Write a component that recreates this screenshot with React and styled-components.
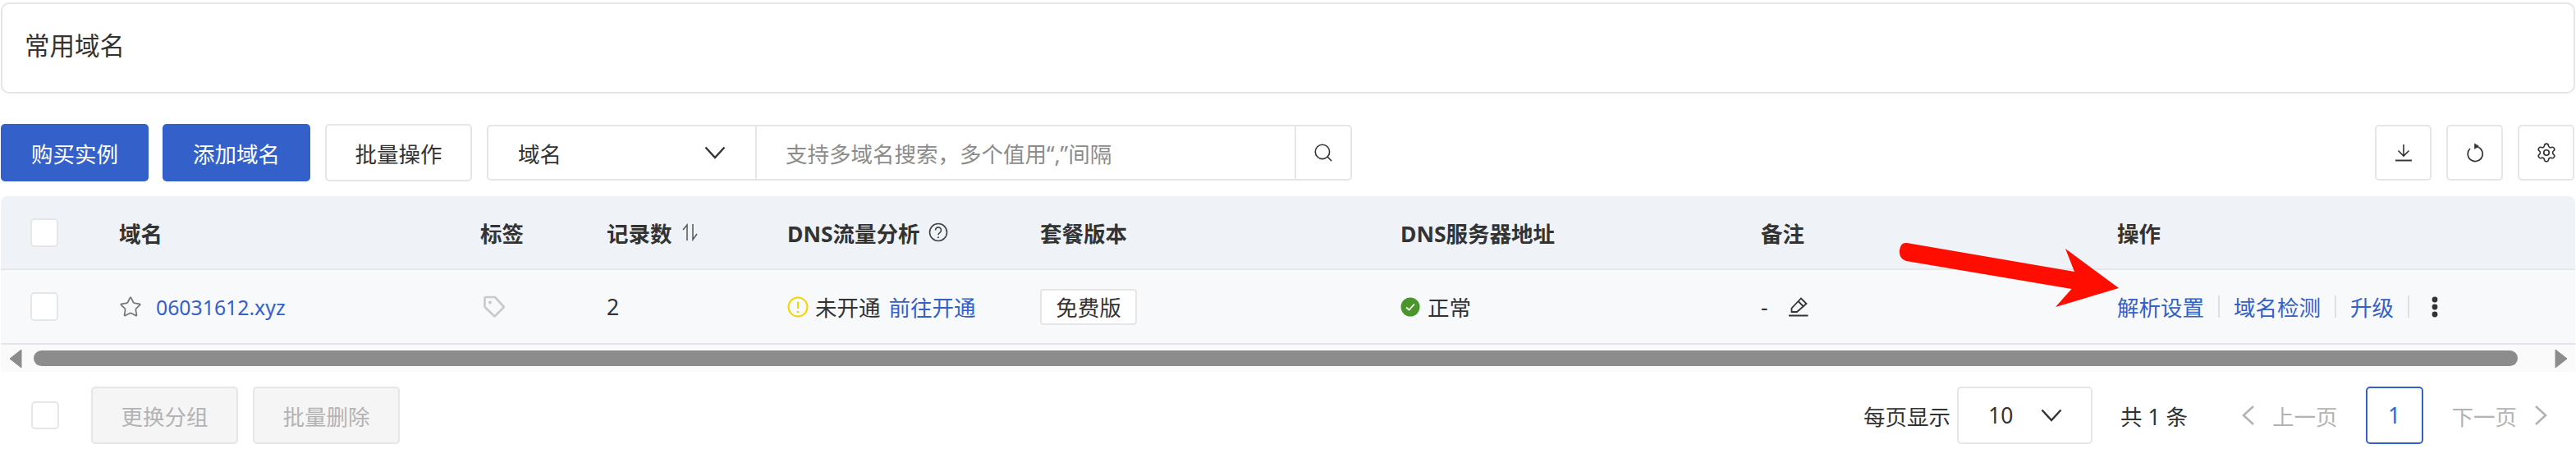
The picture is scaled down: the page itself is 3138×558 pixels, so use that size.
import React from 'react';
import styled, { createGlobalStyle } from 'styled-components';
import { Settings, Search, Star } from 'lucide-react';

const GlobalStyle = createGlobalStyle`
  html, body {
    margin: 0;
    padding: 0;
    background: #fff;
  }
  body {
    font-family: "Noto Sans", "Noto Sans CJK SC", sans-serif;
    color: #333;
    font-size: 26.5px;
  }
  * {
    box-sizing: border-box;
  }
`;

const COLUMNS = '108px 440px 154px 220px 308px 439px 439px 434px 1fr';

const Page = styled.div`
  width: 3138px;
  height: 558px;
  padding: 3px 1px 0 1px;
  overflow: hidden;
  position: relative;
`;

const TitleCard = styled.div`
  height: 111px;
  border: 2px solid #e6e6e6;
  border-radius: 10px;
  padding: 0 27px 9px;
  display: flex;
  align-items: center;
  font-size: 30.5px;
`;

const Toolbar = styled.div`
  display: flex;
  align-items: center;
  margin-top: 37px;
  height: 70px;
`;

const Button = styled.button`
  height: 70px;
  width: ${(p) => p.$width || 180}px;
  margin-right: ${(p) => p.$gap || 0}px;
  font: inherit;
  border-radius: 5px;
  flex: none;
  padding: 0;
  background: ${(p) => (p.$primary ? '#3461c9' : '#fff')};
  color: ${(p) => (p.$primary ? '#fff' : '#333')};
  border: ${(p) => (p.$primary ? 'none' : '2px solid #e6e6e6')};
`;

const SearchGroup = styled.div`
  display: flex;
  width: 1054px;
  height: 68px;
  border: 2px solid #e6e6e6;
  border-radius: 5px;
`;

const FieldSelect = styled.div`
  width: 327px;
  padding: 0 36px;
  display: flex;
  align-items: center;
  justify-content: space-between;
  border-right: 2px solid #e6e6e6;
`;

const Placeholder = styled.div`
  flex: 1;
  padding-left: 35px;
  display: flex;
  align-items: center;
  color: #8c8c8c;
`;

const SearchButton = styled.div`
  width: 68px;
  border-left: 2px solid #e6e6e6;
  display: flex;
  align-items: center;
  justify-content: center;
`;

const ToolIcons = styled.div`
  margin-left: auto;
  margin-right: 1px;
  display: flex;
  gap: 18px;
`;

const IconButton = styled.div`
  width: 69px;
  height: 68px;
  border: 2px solid #e6e6e6;
  border-radius: 5px;
  display: flex;
  align-items: center;
  justify-content: center;
`;

const Table = styled.div`
  margin-top: 18px;
  border-radius: 8px 8px 0 0;
  overflow: hidden;
`;

const HeadRow = styled.div`
  display: grid;
  grid-template-columns: ${COLUMNS};
  align-items: center;
  height: 90px;
  padding-left: 36px;
  background: #eff2f7;
  border-bottom: 2px solid #e4e6ea;
  font-weight: 700;
`;

const BodyRow = styled.div`
  display: grid;
  grid-template-columns: ${COLUMNS};
  align-items: center;
  height: 91px;
  padding-left: 36px;
  background: #f8f9fb;
  border-bottom: 2px solid #e4e6ea;
`;

const Check = styled.div`
  width: 34px;
  height: 35px;
  background: #fff;
  border: 2px solid #e6e6e6;
  border-radius: 5px;
`;

const Cell = styled.div`
  display: flex;
  align-items: center;
`;

const Link = styled.span`
  color: #3461c9;
`;

const DomainLink = styled(Link)`
  margin-left: 17px;
  font-size: 24.8px;
`;

const Plan = styled.div`
  width: 118px;
  height: 44px;
  background: #fff;
  border: 2px solid #e6e6e6;
  border-radius: 4px;
  display: flex;
  align-items: center;
  justify-content: center;
`;

const Divider = styled.i`
  width: 2px;
  height: 27px;
  background: #dcdfe4;
  margin: 0 17px;
`;

const ScrollBar = styled.div`
  height: 33px;
  background: #fafafa;
  display: flex;
  align-items: center;
  padding: 0 10px;
`;

const ScrollThumb = styled.div`
  height: 19px;
  background: #8c8c8c;
  border-radius: 10px;
  flex: none;
  width: 3026px;
  margin: 0 45px 0 14px;
`;

const Footer = styled.div`
  margin-top: 18px;
  height: 70px;
  display: flex;
  align-items: center;
  padding-left: 37px;
`;

const FooterCheck = styled(Check)`
  margin-right: 39px;
  height: 34px;
`;

const DisabledButton = styled(Button)`
  width: 179px;
  background: #f5f5f5;
  color: #b3b3b3;
  margin-right: 18px;
`;

const Pager = styled.div`
  margin-left: auto;
  display: flex;
  align-items: center;
  padding-right: 34px;
`;

const PageSize = styled.div`
  width: 165px;
  height: 70px;
  margin: 0 34px 0 8px;
  padding: 0 35px 0 36px;
  border: 2px solid #e6e6e6;
  border-radius: 5px;
  display: flex;
  align-items: center;
  justify-content: space-between;
`;

const PageLink = styled.span`
  color: #b3b3b3;
  display: flex;
  align-items: center;
  gap: 21px;
`;

const CurrentPage = styled.div`
  width: 70px;
  height: 70px;
  margin: 0 35px 0 34px;
  border: 2px solid #3461c9;
  border-radius: 5px;
  color: #3461c9;
  display: flex;
  align-items: center;
  justify-content: center;
`;

const Total = styled.span`
  margin-right: 66px;
`;

const Spacer = styled.span`
  margin-left: ${(p) => p.$left || 0}px;
  margin-right: ${(p) => p.$right || 0}px;
  display: inline-flex;
`;

const ArrowMark = styled.svg`
  position: absolute;
  left: 2300px;
  top: 290px;
`;

const Caret = () => (
  <svg width="26" height="16" viewBox="0 0 26 16" fill="none" stroke="#333" strokeWidth="2.4">
    <path d="M1.5 1.5 L13 14 L24.500 1.500" />
  </svg>
);

const PageArrow = ({ flip }) => (
  <svg width="16" height="24" viewBox="0 0 16 24" fill="none" stroke="#b3b3b3" strokeWidth="2.6">
    <path d={flip ? 'M2 1 L14 12 L2 23' : 'M14 1 L2 12 L14 23'} />
  </svg>
);

const TagIcon = () => (
  <svg width="28" height="28" viewBox="0 0 28 28" fill="none" stroke="#cacaca" strokeWidth="2.6">
    <path d="M2.500 3.500 Q2.500 2 4 2 L15 2 L26 14 L14.500 25.500 L2.500 14 Z" strokeLinejoin="round" />
    <circle cx="9" cy="8.500" r="2" fill="#cacaca" stroke="none" />
  </svg>
);

const SortIcon = () => (
  <svg width="24" height="24" viewBox="0 0 24 24" fill="none" stroke="#555" strokeWidth="1.5">
    <path d="M8 22 V3 L3 9" />
    <path d="M15 2 V21 L20 14" />
  </svg>
);

const HelpIcon = () => (
  <svg width="24" height="26" viewBox="0 0 24 24" fill="none" stroke="#444" strokeWidth="1.6">
    <circle cx="12" cy="12" r="10.500" />
    <path d="M8.500 9.500a3.500 3.500 0 1 1 5.500 2.800c-1.200.8-2 1.400-2 2.900" />
    <circle cx="12" cy="18.300" r="1" fill="#444" stroke="none" />
  </svg>
);

const WarnIcon = () => (
  <svg width="26" height="26" viewBox="0 0 26 26" fill="none" stroke="#f5d400" strokeWidth="2">
    <circle cx="13" cy="13" r="11.500" />
    <path d="M13 6.500 V15" />
    <circle cx="13" cy="19" r="1.300" fill="#f5d400" stroke="none" />
  </svg>
);

const OkIcon = () => (
  <svg width="24" height="24" viewBox="0 0 24 24">
    <circle cx="12" cy="12" r="11.500" fill="#4a962a" />
    <path d="M7 12.500 L10.500 15.500 L17 8.500" fill="none" stroke="#fff" strokeWidth="1.8" />
  </svg>
);

const EditIcon = () => (
  <svg width="24" height="24" viewBox="0 0 24 24" fill="none" stroke="#333" strokeWidth="1.8">
    <path d="M3.500 18 V13.500 L15 1.500 L21.500 8 L10 18 Z" strokeLinejoin="miter" />
    <path d="M11.500 5 L18 11.500" />
    <path d="M0 22.500 H23.500" strokeWidth="2" />
  </svg>
);

const DownloadIcon = () => (
  <svg width="22" height="22" viewBox="0 0 22 22" fill="none" stroke="#333" strokeWidth="1.6">
    <path d="M11 1 V15 M4.500 8.500 L11 15 L17.500 8.500" />
    <path d="M1 20.500 H21" strokeWidth="1.9" />
  </svg>
);

const RefreshIcon = () => (
  <svg width="22" height="24" viewBox="0 0 22 24" fill="none" stroke="#333" strokeWidth="1.7">
    <path d="M5 7 A9 9 0 1 0 11 4.500" />
    <path d="M10.500 1 L15.500 4 L10.500 7.500 Z" fill="#333" strokeWidth="0.6" />
  </svg>
);

const MoreIcon = () => (
  <svg width="8" height="26" viewBox="0 0 8 26" fill="#333">
    <circle cx="4" cy="4" r="3.400" />
    <circle cx="4" cy="13" r="3.400" />
    <circle cx="4" cy="22" r="3.400" />
  </svg>
);

const Triangle = ({ flip }) => (
  <svg width="16" height="24" viewBox="0 0 16 24" style={{ flex: 'none' }}>
    <path d={flip ? 'M1 1 L15 12 L1 23 Z' : 'M15 1 L1 12 L15 23 Z'} fill="#8c8c8c" stroke="#8c8c8c" strokeLinejoin="round" />
  </svg>
);

const App = () => (
  <Page>
    <GlobalStyle />
    <TitleCard>常用域名</TitleCard>

    <Toolbar>
      <Button $primary $gap={17}>购买实例</Button>
      <Button $primary $gap={18}>添加域名</Button>
      <Button $width={179} $gap={18}>批量操作</Button>
      <SearchGroup>
        <FieldSelect>
          域名
          <Caret />
        </FieldSelect>
        <Placeholder>支持多域名搜索，多个值用“,”间隔</Placeholder>
        <SearchButton>
          <Search size={26} strokeWidth={1.5} color="#333" />
        </SearchButton>
      </SearchGroup>
      <ToolIcons>
        <IconButton><DownloadIcon /></IconButton>
        <IconButton><RefreshIcon /></IconButton>
        <IconButton><Settings size={26} strokeWidth={1.5} color="#333" /></IconButton>
      </ToolIcons>
    </Toolbar>

    <Table>
      <HeadRow>
        <Check />
        <div>域名</div>
        <div>标签</div>
        <Cell>记录数<Spacer $left={10}><SortIcon /></Spacer></Cell>
        <Cell>DNS流量分析<Spacer $left={10}><HelpIcon /></Spacer></Cell>
        <div>套餐版本</div>
        <div>DNS服务器地址</div>
        <div>备注</div>
        <div>操作</div>
      </HeadRow>
      <BodyRow>
        <Check />
        <Cell>
          <Star size={28} strokeWidth={1.5} color="#777" />
          <DomainLink>06031612.xyz</DomainLink>
        </Cell>
        <Cell><Spacer $left={3}><TagIcon /></Spacer></Cell>
        <div>2</div>
        <Cell>
          <WarnIcon />
          <Spacer $left={8} $right={10}>未开通</Spacer>
          <Link>前往开通</Link>
        </Cell>
        <Cell><Plan>免费版</Plan></Cell>
        <Cell><OkIcon /><Spacer $left={9}>正常</Spacer></Cell>
        <Cell>-<Spacer $left={25}><EditIcon /></Spacer></Cell>
        <Cell>
          <Link>解析设置</Link>
          <Divider />
          <Link>域名检测</Link>
          <Divider />
          <Link>升级</Link>
          <Divider />
          <Spacer $left={10}><MoreIcon /></Spacer>
        </Cell>
      </BodyRow>
      <ScrollBar>
        <Triangle />
        <ScrollThumb />
        <Triangle flip />
      </ScrollBar>
    </Table>

    <Footer>
      <FooterCheck />
      <DisabledButton>更换分组</DisabledButton>
      <DisabledButton>批量删除</DisabledButton>
      <Pager>
        <span>每页显示</span>
        <PageSize>10<Caret /></PageSize>
        <Total>共 1 条</Total>
        <PageLink><PageArrow />上一页</PageLink>
        <CurrentPage>1</CurrentPage>
        <PageLink>下一页<PageArrow flip /></PageLink>
      </Pager>
    </Footer>

    <ArrowMark width="290" height="90" viewBox="0 0 290 90">
      <path d="M23 6 L227 41 L216 13 L281 61 L204 84 L223.500 62 L22 28 Q13 25 14 15 Q15 5 23 6 Z" fill="#ff0e00" />
    </ArrowMark>
  </Page>
);

export default App;
